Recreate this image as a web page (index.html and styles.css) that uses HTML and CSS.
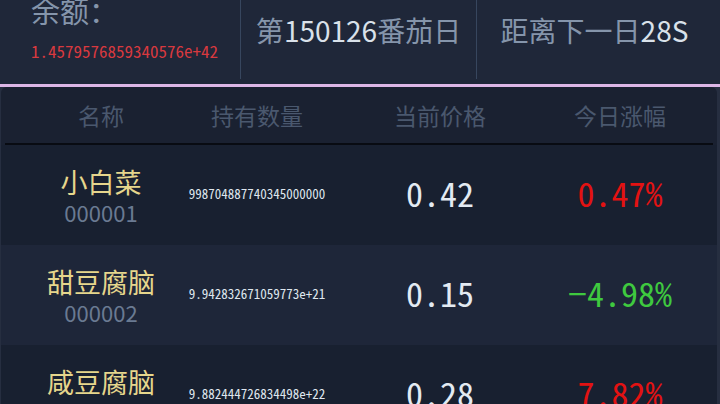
FILE: index.html
```html
<!DOCTYPE html>
<html lang="zh-CN">
<head>
<meta charset="utf-8">
<title>番茄日</title>
<link rel="stylesheet" href="styles.css">
</head>
<body>
<header class="top">
  <div class="cell balance">
    <div class="label">余额：</div>
    <div class="amount">1.4579576859340576e+42</div>
  </div>
  <div class="sep"></div>
  <div class="cell info">第<span class="num">150126</span>番茄日</div>
  <div class="sep"></div>
  <div class="cell info last">距离下一日<span class="num">28S</span></div>
</header>
<div class="accent"></div>
<main class="panel">
  <div class="grid thead">
    <div class="c">名称</div>
    <div class="c">持有数量</div>
    <div class="c">当前价格</div>
    <div class="c">今日涨幅</div>
  </div>
  <div class="grid row dark">
    <div class="c name"><div class="title">小白菜</div><div class="code">000001</div></div>
    <div class="c hold">998704887740345000000</div>
    <div class="c price">0.42</div>
    <div class="c change up">0.47%</div>
  </div>
  <div class="grid row light">
    <div class="c name"><div class="title">甜豆腐脑</div><div class="code">000002</div></div>
    <div class="c hold">9.942832671059773e+21</div>
    <div class="c price">0.15</div>
    <div class="c change down">−4.98%</div>
  </div>
  <div class="grid row dark">
    <div class="c name"><div class="title">咸豆腐脑</div><div class="code">000003</div></div>
    <div class="c hold">9.882444726834498e+22</div>
    <div class="c price">0.28</div>
    <div class="c change up">7.82%</div>
  </div>
</main>
</body>
</html>
```
FILE: styles.css
```css
html, body {
  margin: 0;
  padding: 0;
  width: 720px;
  height: 404px;
  overflow: hidden;
  background: #262e40;
  font-family: "Noto Sans CJK SC", "Noto Sans", sans-serif;
}
.top {
  height: 84px;
  display: flex;
  background: #1f2739;
}
.cell {
  box-sizing: border-box;
}
.balance {
  width: 240px;
  padding-left: 31px;
}
.label {
  font-size: 29px;
  line-height: 32px;
  margin-top: -6px;
  color: #8595ab;
}
.amount {
  margin-top: 15px;
  font-family: "Noto Sans Mono CJK SC", "DejaVu Sans Mono", monospace;
  font-size: 17px;
  line-height: 20px;
  color: #d8393f;
}
.sep {
  width: 1px;
  height: 79px;
  background: #37465e;
}
.info {
  flex: 1;
  display: flex;
  justify-content: center;
  padding-top: 11px;
  font-size: 28px;
  line-height: 38px;
  color: #8595ab;
}
.info.last {
  padding-right: 8px;
}
.num {
  color: #d9e1ea;
}
.accent {
  height: 3px;
  background: #dcb6e6;
}
.panel {
  margin: 0 3px 0 1px;
  height: 317px;
  background: #1a2131;
  border-radius: 6px 6px 0 0;
  overflow: hidden;
}
.grid {
  display: grid;
  grid-template-columns: 192px 120px 246px 114px;
  margin: 0 4px;
  align-items: center;
}
.c {
  display: flex;
  flex-direction: column;
  align-items: center;
  text-align: center;
  min-width: 0;
}
.thead {
  height: 56px;
  font-size: 23px;
  color: #4a586e;
  border-bottom: 2px solid #080b12;
}
.row {
  height: 100px;
  margin: 0;
  padding: 0 4px;
}
.dark { background: #182030; }
.light { background: #1e2639; }
.name { padding-top: 4px; }
.title {
  font-size: 27px;
  line-height: 30px;
  color: #e6d68c;
  white-space: nowrap;
}
.code {
  font-size: 22px;
  line-height: 30px;
  color: #6a7a92;
}
.hold {
  font-family: "Noto Sans Mono CJK SC", "DejaVu Sans Mono", monospace;
  font-size: 13px;
  color: #dfe6ee;
  white-space: nowrap;
  padding-bottom: 3px;
}
.price, .change {
  font-family: "Noto Sans Mono CJK SC", "DejaVu Sans Mono", monospace;
  font-size: 34px;
  color: #e3eaf2;
  white-space: nowrap;
  padding-bottom: 6px;
}
.change.up { color: #e31212; }
.change.down { color: #3fc93f; }
```
